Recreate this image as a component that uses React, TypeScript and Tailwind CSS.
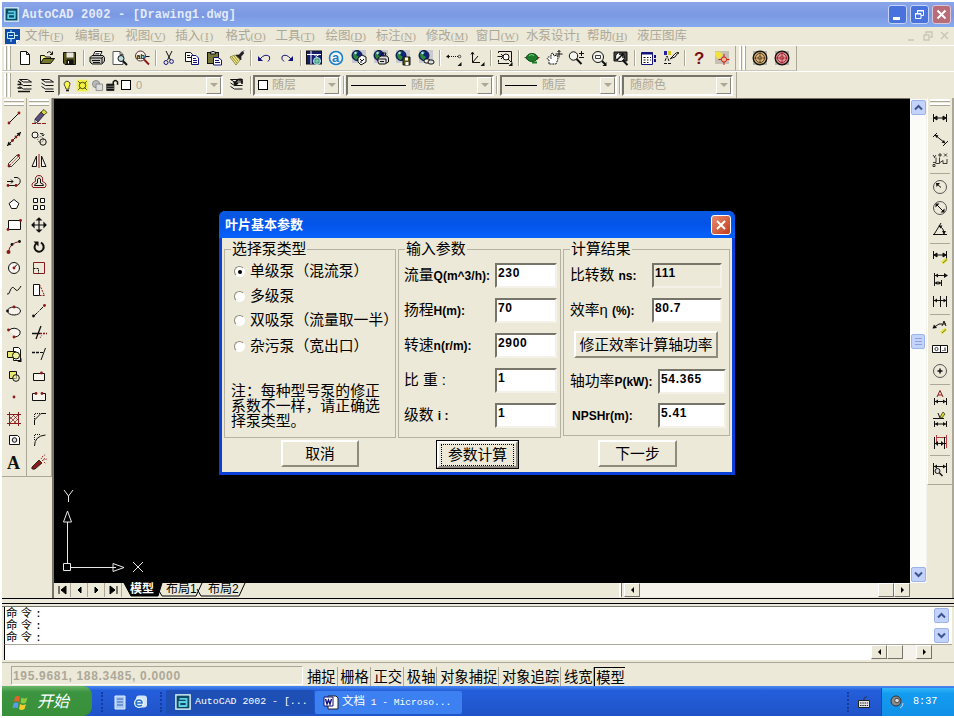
import { FC, Fragment, ReactNode } from "react";

interface IIconProps {
  children: ReactNode;
  size?: number;
}

const Icon: FC<IIconProps> = ({ children, size = 18 }) => (
  <svg
    width={size}
    height={size}
    viewBox="0 0 18 18"
    fill="none"
    stroke="#111"
    strokeWidth="1"
    className="shrink-0"
  >
    {children}
  </svg>
);

const RED = "#8b1a1a";

const Dot: FC<{ x: number; y: number; c?: string }> = ({ x, y, c = RED }) => (
  <circle cx={x} cy={y} r="1.4" fill={c} stroke="none" />
);

const globe = (
  <Fragment>
    <rect x="2" y="1" width="14" height="13" fill="#c9c9d2" stroke="none" />
    <circle cx="7" cy="6.5" r="5" fill="#10247c" stroke="#08123c" />
    <path d="M3 5q3-4 5-2l-2 3 3 2-2 3q-4-1-4-6" fill="#2b8a3a" stroke="none" />
    <circle cx="5.5" cy="4" r="1.2" fill="#bfe0ff" stroke="none" />
  </Fragment>
);

const dimH = (y: number) => (
  <path
    d={`M2.5 ${y - 4}v8M15.5 ${y - 4}v8M3 ${y}h12M6 ${y - 2}l-3 2 3 2zM12 ${y - 2}l3 2-3 2z`}
    fill="#111"
  />
);

const fileIcons = [
  <Icon key="new"><path d="M4.5 2.5h6l3 3v10h-9zM10.5 2.5v3h3" fill="#fff" /></Icon>,
  <Icon key="open">
    <path d="M2.5 14.5V6.5h4l1 1.500h5V9" fill="#f3ee8a" />
    <path d="M2.5 14.5L5.500 9.500h11l-4 5z" fill="#77772a" />
    <path d="M9 4q3-3 5 1M14.5 2.5v3H12" />
  </Icon>,
  <Icon key="save">
    <path d="M2.5 3.5h12v12H4l-1.500-1.500z" fill="#55551c" />
    <path d="M5.500 3.500h7v5h-7z" fill="#e8e8e0" stroke="none" />
    <path d="M6 11h6v4H6z" fill="#111" />
    <path d="M7.5 12v2.500" stroke="#fff" />
  </Icon>,
];

const printIcons = [
  <Icon key="print">
    <path d="M5 7l2-4.500h7l-2 4.500" fill="#fff" />
    <path d="M7.500 4.500h4M7 6h4" strokeWidth=".7" />
    <path d="M2 8.500l2-2h11l1.500 2V12L14 15H4l-2-2z" fill="#c4c4bc" />
    <path d="M2 9h12v5M4 11.500h8M5 13.500h7M14 9l2-2" />
  </Icon>,
  <Icon key="preview">
    <path d="M3 2.500h7l3 3v10H3zM10 2.500v3h3" fill="#fff" stroke="#555" />
    <circle cx="11" cy="9.500" r="3" fill="#b8dcdc" />
    <path d="M13 12l4 4" strokeWidth="2" />
  </Icon>,
  <Icon key="find">
    <circle cx="7.500" cy="7" r="5" fill="#f5efe8" stroke="#5c2c2c" />
    <path d="M11 10.500l5 5" stroke={RED} strokeWidth="2" />
    <text x="3.500" y="9.500" fontSize="7" fontFamily="Liberation Sans" fontWeight="700" fill="#111" stroke="none">ab</text>
    <path d="M13 7.500h3.500" />
  </Icon>,
];

const editIcons = [
  <Icon key="cut">
    <path d="M6 2l4.500 9M12 2L7.500 11" />
    <circle cx="6" cy="13.500" r="2" stroke="#14147c" />
    <circle cx="11.500" cy="12.500" r="1.900" stroke="#14147c" />
  </Icon>,
  <Icon key="copy">
    <path d="M2.500 3.500h5l2 2v7h-7z" fill="#fff" />
    <path d="M4 6.500h3M4 8.500h4" />
    <path d="M8.500 6.500h4.500l2.500 2.500v6.500h-7z" fill="#fff" stroke="#14147c" />
    <path d="M10 9.500h3M10 11.500h4M10 13.500h4" stroke="#14147c" />
  </Icon>,
  <Icon key="paste">
    <rect x="2.500" y="3.500" width="11" height="11" fill="#77773c" />
    <path d="M5.500 5V3h1.500q1-2 2 0h1.500v2z" fill="#ddd" />
    <path d="M8.500 8.500h4.500l3.500 2.500v5h-8z" fill="#fff" stroke="#14147c" />
    <path d="M10 11.500h4M10 13.500h5" stroke="#14147c" />
  </Icon>,
  <Icon key="brush">
    <path d="M2 8l5-2 5 5-4 5z" fill="#efe88a" stroke="#77772a" strokeWidth=".8" />
    <path d="M4 8l5 6M6 7l4 5" stroke="#77772a" strokeWidth=".8" />
    <path d="M8 6l3 0 3-3.500 2 1.500-3 3.500v3.500z" fill="#222" strokeWidth=".6" />
    <path d="M14 3.500l2-2" stroke="#2b2ba0" />
  </Icon>,
];

const undoIcons = [
  <Icon key="undo">
    <path d="M5 10q5-6 9.500-2.500q1 3-1.500 5" stroke="#14147c" />
    <path d="M3 7v5h5z" fill="#14147c" stroke="none" />
  </Icon>,
  <Icon key="redo">
    <path d="M13 10Q8 4 4 7.500q-1 3 2 5" stroke="#14147c" />
    <path d="M15 7v5h-5z" fill="#14147c" stroke="none" />
  </Icon>,
];

const webIcons = [
  <Icon key="today">
    <rect x="1.500" y="2" width="15" height="13" fill="#14206c" />
    <path d="M2 5.500h14M6 2v13" stroke="#fff" />
    <path d="M9 5.500l2 2 3-2" stroke="#fff" />
    <circle cx="12" cy="12" r="3.500" fill="#3c9c6c" stroke="#bfe0ff" />
    <path d="M12 8.500v7M8.500 12h7" stroke="#bfe0ff" strokeWidth=".6" />
  </Icon>,
  <Icon key="point">
    <circle cx="9" cy="9" r="6.500" fill="#f2f8fc" stroke="#1b7dc4" strokeWidth="1.600" />
    <text x="5" y="13" fontSize="13" fontFamily="Liberation Sans" fontWeight="700" fill="#1b7dc4" stroke="none">a</text>
  </Icon>,
  <Icon key="meet">{globe}<path d="M8 9l4-3 4 2v5l-5 3-3-3z" fill="#f4f4f4" /><path d="M10 10l2 2 2-2M11 14v-2" /></Icon>,
  <Icon key="publish">{globe}<path d="M6 9l3-2h6l1.500 2v4L13 15H7l-1-2z" fill="#ddd" /><path d="M6 10h8v4M9 7l1-3h4l-1 3M8 12.500h4" /></Icon>,
  <Icon key="etransmit">{globe}<path d="M9 8h7v8H9z" fill="#55551c" /><path d="M11 8.500h3v3h-3zM11.500 13h3v3h-3z" fill="#fff" stroke="none" /></Icon>,
  <Icon key="hyper">{globe}<rect x="7" y="10" width="6" height="4" rx="2" fill="#eee" /><rect x="11" y="11" width="6" height="4" rx="2" fill="#ddd" /></Icon>,
];

const corner = <path d="M16.500 13v4h-4z" fill="#111" stroke="none" />;

const snapIcons = [
  <Icon key="track"><path d="M4 7.500h9" strokeDasharray="1 1" /><path d="M1 7.500l3-2v4z" fill="#111" stroke="none" /><circle cx="14.500" cy="7.500" r="1.300" strokeWidth=".7" />{corner}</Icon>,
  <Icon key="ucs"><path d="M4.500 4v9.500H12M4.500 13.500L10 7M3 5.500L4.500 3 6 5.500" />{corner}</Icon>,
];

const aerialIcons = [
  <Icon key="aerial">
    <path d="M2.500 4V2.500H15.500v11M2.500 13.500V11M1.500 7.500h5M5 5l2.500 2.500L5 10" />
    <circle cx="10" cy="8" r="3" fill="#fff" />
    <path d="M12 10l3 3M2 14.500h11" />{corner}
  </Icon>,
];

const zoomIcons = [
  <Icon key="orbit">
    <path d="M1 8h16l-3 3H5z" fill="#7c2c1c" stroke="none" />
    <ellipse cx="9" cy="8.500" rx="5.500" ry="4" fill="#1c7c2c" stroke="#0c4c1c" />
    <path d="M6 6.500q3-2 5 0" stroke="#7fdc7f" />
    <path d="M9 12.500h5v2H9z" fill="#1c7c2c" stroke="none" />
  </Icon>,
  <Icon key="pan">
    <path d="M4 15V11L2 9.500l2-2 2 2V5l2-1 1 3 3-1 1 4-2 5z" fill="#fff" strokeDasharray="2 .8" />
    <path d="M14 1.500v7M10.500 5h7M12.500 3L14 1.500 15.500 3" />
  </Icon>,
  <Icon key="rt"><circle cx="6.500" cy="7" r="4.200" fill="#f4f4ee" /><path d="M9.500 10l5 5" strokeWidth="2" /><path d="M12 4.500h5M14.500 2v5M12 8.500h5" /></Icon>,
  <Icon key="win"><circle cx="8" cy="8" r="5.500" fill="#f4f4ee" /><path d="M5.500 6.500h5v3h-5z" strokeWidth=".8" /><path d="M12 12l3 3" strokeWidth="2" />{corner}</Icon>,
  <Icon key="prev"><path d="M2 3h13v9H2z" fill="#444" /><circle cx="8" cy="8" r="4.500" fill="#f4f4ee" /><path d="M5 11l6-6M7 5h4v4" strokeWidth="1.500" /><path d="M11 11.500l4.500 4.500" strokeWidth="2" /></Icon>,
];

const propIcons = [
  <Icon key="dc"><path d="M2.500 3.500h11v12h-11z" fill="#fff" stroke="#14147c" /><path d="M2.500 4.500h11" stroke="#14147c" strokeWidth="2" /><path d="M4.500 8.500h2M8 8.500h1.500M11 8.500h1M4.500 11h2M8 11h1.500M11 11h1M4.500 13.500h2M8 13.500h1.500" /><path d="M16 6v7" stroke="#14147c" strokeDasharray="3 1" strokeWidth="2" /></Icon>,
  <Icon key="props"><path d="M2 2h3v4H2z" fill="#2424a4" stroke="none" /><path d="M6 2h3v4H6z" fill="#d8c81c" stroke="none" /><path d="M3 12l2-5 2 5M2 14.500h8" strokeDasharray="3 1" /><path d="M8 10l3-3q4-5 6-3l-2 1-2 3-3 1z" fill="#fff" /></Icon>,
];

const helpIcons = [
  <Icon key="help"><text x="4" y="15" fontSize="17" fontFamily="Liberation Sans" fontWeight="700" fill="#7c1010" stroke="none">?</text></Icon>,
  <Icon key="assist"><rect x="2" y="2" width="14" height="13" fill="#c4c0b4" stroke="none" /><path d="M2 3q5-2 8 3l-4 4q-4-1-4-7" fill="#f2e23c" stroke="none" /><path d="M11 5v11M5.500 10.500h11" stroke="#d01818" /><circle cx="11" cy="10.500" r="2.600" fill="#f2c48c" stroke="#d01818" /></Icon>,
];

const target = (a: string, b: string) => (
  <Icon>
    <rect x="2" y="2" width="14" height="14" fill="#b4b4ac" stroke="none" />
    <circle cx="9" cy="9" r="6.800" fill={a} strokeWidth="1.400" />
    <circle cx="9" cy="9" r="4.500" stroke={b} />
    <circle cx="9" cy="9" r="1.800" stroke={b} strokeWidth=".7" />
    <path d="M9 2.500v13M2.500 9h13" stroke={b} strokeDasharray="2 1" />
  </Icon>
);

const groups: { w: string; icons: ReactNode[] }[] = [
  { w: "w-[67px]", icons: fileIcons },
  { w: "w-[67px]", icons: printIcons },
  { w: "w-[90px]", icons: editIcons },
  { w: "w-[45px]", icons: undoIcons },
  { w: "w-[134px]", icons: webIcons },
  { w: "w-[46px]", icons: snapIcons },
  { w: "w-[23px]", icons: aerialIcons },
  { w: "w-[111px]", icons: zoomIcons },
  { w: "w-[45px]", icons: propIcons },
  { w: "w-[46px]", icons: helpIcons },
];

const drawIcons: ReactNode[] = [
  <Fragment><path d="M4 14L14 4" /><Dot x={4} y={14} /><Dot x={14} y={4} /></Fragment>,
  <Fragment><path d="M2 16L16 2" /><path d="M2 16l1.500-4.500L6.500 14.500zM16 2l-4.500 1.500L14.500 6.500z" fill="#111" stroke="none" /><Dot x={7.5} y={10.5} /><Dot x={11} y={7} /></Fragment>,
  <Fragment><path d="M3 12l9-9 3 3-9 9z" strokeWidth=".8" /><path d="M5 13l9-9" stroke={RED} strokeDasharray="2 1" strokeWidth=".8" /><Dot x={4} y={14} /><Dot x={13.5} y={3.5} /></Fragment>,
  <Fragment><path d="M2.500 12.500h9M9 4.500h3q4 1 3 5-1 3-4 3M2 8.500h6M6 6.500l2 2-2 2" /><Dot x={3} y={12.5} /><Dot x={11} y={12.5} /></Fragment>,
  <path d="M9 4.500l5 4-2.500 5h-5L4 8.500z" fill="#fff" />,
  <Fragment><path d="M3.500 4.500h12v9h-12z" fill="#fff" /><Dot x={3} y={13.5} /><Dot x={15.5} y={4.5} /></Fragment>,
  <Fragment><path d="M3.500 14q1-9 11-10.500" stroke={RED} /><circle cx="3.500" cy="14" r="2" fill={RED} stroke="none" /><Dot x={7} y={6.5} c="#111" /><Dot x={14.5} y={3.5} c="#111" /></Fragment>,
  <Fragment><circle cx="9" cy="9" r="5.500" fill="#f6f4ec" /><path d="M9 9l3-3.500" /><Dot x={9} y={9} /></Fragment>,
  <path d="M2 13q2 1 3-3 2-6 5-2 2 4 6-3" />,
  <Fragment><ellipse cx="9" cy="9" rx="6.500" ry="4" fill="#f6f4ec" /><Dot x={9} y={5} /><Dot x={2.5} y={9} c="#111" /></Fragment>,
  <Fragment><path d="M4 6q6-4 11 1 1 5-5 6" fill="#f6f4ec" /><Dot x={3.5} y={6} /><Dot x={9} y={13} /></Fragment>,
  <Fragment><path d="M8.500 2.500h5l2 2v11h-7z" fill="#fff" /><path d="M2.500 6.500h8v6h-8z" fill="#e8e870" /><circle cx="11" cy="10.500" r="3.500" fill="#f0f0a0" />{corner}</Fragment>,
  <Fragment><path d="M4.500 4.500h7v7h-7z" fill="#e8e870" /><circle cx="11" cy="11" r="3.300" fill="#f0f0c0" fillOpacity=".6" /></Fragment>,
  <Dot x={9} y={9} />,
  <Fragment><path d="M4.500 2v14M13.500 2v14M2 4.500h14M2 13.500h14" stroke={RED} /><path d="M5 9l4-4M5 13l8-8M9 13l4-4M5 7l6 6M8 5l5 5" stroke={RED} strokeWidth=".7" /></Fragment>,
  <Fragment><path d="M4.500 4.500h8l2 2v7h-10z" fill="#fff" /><circle cx="9.500" cy="9" r="2.300" fill="#ddd" /></Fragment>,
  <text x="2" y="15.500" fontSize="18" fontFamily="Liberation Serif" fontWeight="700" fill="#111" stroke="none">A</text>,
];

const modifyIcons: ReactNode[] = [
  <Fragment><path d="M2 14.500h14" stroke={RED} strokeDasharray="4 1" /><path d="M5 10l6-7 3 3-6 7z" fill="#5c4c7c" strokeWidth=".7" /><path d="M11 3l3-2.500 3 3L14 6z" fill="#d8d83c" strokeWidth=".7" /><path d="M5 10l3 3-3 1z" fill="#fff" strokeWidth=".7" /></Fragment>,
  <Fragment><circle cx="5" cy="5" r="3" fill="#f6f4ec" /><circle cx="13" cy="12" r="3.200" /><circle cx="10.500" cy="9.500" r="2.800" strokeDasharray="1 1" strokeWidth=".8" /><path d="M10 3.500h3v2M11.500 4.500l1.500 1.500 1.500-1.500" strokeWidth=".8" /></Fragment>,
  <Fragment><path d="M6.500 4v10.500H2zM11.500 4v10.500H16z" fill="#f6f4ec" /><path d="M9 2v14" stroke={RED} /></Fragment>,
  <Fragment><path d="M3 14.500q-3-4 2.500-6-1-6 3.500-6t3.500 6q5.500 2 2.500 6z" stroke={RED} /><path d="M4.500 12.500q0-2 3-2.500V6q1.500-2 3 0v4q3 .500 3 2.500z" /></Fragment>,
  <path d="M3.500 3.500h4v4h-4zM10.500 3.500h4v4h-4zM3.500 10.500h4v4h-4zM10.500 10.500h4v4h-4z" fill="#fff" />,
  <path d="M9 2v14M2 9h14M7 4l2-2 2 2zM7 14l2 2 2-2zM4 7L2 9l2 2zM14 7l2 2-2 2z" fill="#111" strokeWidth="1.200" />,
  <Fragment><path d="M6 5.500q-3 4 0 7 4 3 7-1 2-4-2-7" strokeWidth="2" /><path d="M3.500 3.500h5v5z" fill="#111" stroke="none" /></Fragment>,
  <Fragment><path d="M3.500 3.500h11v11h-11z" stroke={RED} /><path d="M3.500 9.500h5v5" strokeDasharray="2 1" /></Fragment>,
  <Fragment><path d="M3.500 3.500h6v11h-6z" fill="#fff" /><path d="M9.500 3.500l5 11h-5" stroke={RED} strokeDasharray="2 1" /></Fragment>,
  <Fragment><path d="M4 14L14 4" strokeDasharray="5 1 1 1" /><Dot x={3.5} y={14} c="#111" /><Dot x={14.5} y={3.5} /></Fragment>,
  <Fragment><path d="M2 9.500h8M6 15l5-13" strokeWidth="1.300" /><path d="M10 9.500h7" stroke={RED} strokeDasharray="2 1" strokeWidth="1.500" /><path d="M10 14l2-3" stroke={RED} strokeDasharray="1 1" /></Fragment>,
  <Fragment><path d="M2 7.500h8" strokeDasharray="3 1" strokeWidth="1.500" /><path d="M10 7.500h3M11 15l4.500-12" /></Fragment>,
  <Fragment><path d="M3.500 6.500h11v7h-11z" fill="#f6f4ec" /><Dot x={11.5} y={6} /></Fragment>,
  <Fragment><path d="M5 5.500H2.500v7h13v-7H13" fill="#f6f4ec" /><Dot x={6} y={5.5} /><Dot x={12} y={5.5} /></Fragment>,
  <Fragment><path d="M4.500 15v-5L11 3.500h5" /><path d="M4.500 9V3.500H10" strokeDasharray="1 1" /></Fragment>,
  <Fragment><path d="M4.500 15q0-10 11-11" /><path d="M4.500 9V3.500H10" strokeDasharray="1 1" /></Fragment>,
  <Fragment><path d="M2 14l7-7 3 3-7 6q-4 1-3-2" fill="#8b1a1a" strokeWidth=".8" /><path d="M11 6l2-3M13 7l4-1M14 9l2 2M12 4l4-3M12 8l3-3" stroke={RED} strokeDasharray="1.500 1" strokeWidth=".8" /></Fragment>,
];

const dimGroups: { h: string; icons: ReactNode[] }[] = [
  {
    h: "h-[64px]",
    icons: [
      dimH(9),
      <Fragment><path d="M2 7l4-4M12 16l5-5M4 5l10 8" /><path d="M3.500 4.500l4 1-2 2.500zM14.500 13.500l-4-1L13 10z" fill="#111" stroke="none" /></Fragment>,
      <Fragment><path d="M2 11.500h3v-5M4.500 12.500h4v-6M9 11.500l3-2v3M12 12.500h4V8" strokeWidth=".8" /><path d="M2 4l1.500 2L5 4M3.500 6v1M8 3h2v2H8zM13 2.500l3 3M16 2.500l-3 3M2 13.500h2v2H2z" strokeWidth=".8" /></Fragment>,
    ],
  },
  {
    h: "h-[65px]",
    icons: [
      <Fragment><circle cx="9" cy="9" r="6.500" stroke="#555" /><path d="M10 9.500L6 6" /><path d="M5 5h4L5.500 9z" fill="#111" stroke="none" /></Fragment>,
      <Fragment><circle cx="9" cy="9" r="6.500" stroke="#555" /><path d="M5 5l8 8" /><path d="M4.500 4.500h4l-4 4zM13.500 13.500h-4l4-4z" fill="#111" stroke="none" /></Fragment>,
      <Fragment><path d="M2 13.500h14M3 13.500L10 2M8 5q5 2 5 8" /><path d="M13 13.500l-2-3.500h4zM7.500 4.500l4 0-2 3z" fill="#111" stroke="none" /></Fragment>,
    ],
  },
  {
    h: "h-[66px]",
    icons: [
      <Fragment>{dimH(7)}<path d="M11 15l5-4" stroke="#e2e23c" strokeWidth="3" /><path d="M12 15l4-3.500" strokeWidth=".5" /></Fragment>,
      <Fragment><path d="M3.500 3v13M10.500 10v6M3 5.500h12M3 13h7" /><path d="M13 3l4 2.500L13 8zM4 5.500l3-2v4zM4 13l2.500-2v4zM10 13l-2.500-2v4z" fill="#111" stroke="none" /></Fragment>,
      <Fragment><path d="M2.500 4v11M9.500 4v11M15.500 4v11M2 8.500h14" /><path d="M6 6.500l-3 2 3 2zM12.500 6.500l3 2-3 2z" fill="#111" stroke="none" /></Fragment>,
    ],
  },
  {
    h: "h-[65px]",
    icons: [
      <Fragment><path d="M2 9l6-4h3M11 7l2-5 2 5M12 5h3" /><path d="M1.500 9.500l1.500-4L6 9z" fill="#111" stroke="none" /><path d="M10 14l5-4" stroke="#e2e23c" strokeWidth="3" /><path d="M11 14l4-3.500" strokeWidth=".5" /></Fragment>,
      <Fragment><path d="M1.500 5.500h15v7h-15zM9.500 5.500v7" fill="#fff" /><circle cx="5.500" cy="9" r="1.600" strokeWidth=".8" /><path d="M11.500 10.500h1M14 7.500v3.500" /></Fragment>,
      <Fragment><circle cx="9" cy="9" r="6.500" stroke="#555" /><path d="M9 6.500v5M6.500 9h5" strokeWidth="1.500" /></Fragment>,
    ],
  },
  {
    h: "h-[66px]",
    icons: [
      <Fragment><path d="M6 8l3-6.500L12 8M7 6h4" stroke={RED} /><path d="M3.500 9v7M15.500 9v7M3 12.500h12" /><path d="M7 10.500l-3 2 3 2zM12 10.500l3 2-3 2z" fill="#111" stroke="none" /></Fragment>,
      <Fragment><path d="M9 6l3-5 2 2-3 4z" fill="#d8d81c" strokeWidth=".6" /><path d="M2 7.500h11M7 2l2 5" /><path d="M3.500 10v6M15.500 10v6M3 13h12" /><path d="M7 11l-3 2 3 2zM12 11l3 2-3 2z" fill="#111" stroke="none" /></Fragment>,
      <Fragment><path d="M5.500 2v8M15.500 2v13M5 4.500h11" stroke="#b83c3c" /><path d="M3.500 4v12M13.500 4v12M3 10.500h12" /><path d="M7 8l-3 2.500 3 2.500zM10 8l3 2.500-3 2.500z" fill="#111" stroke="none" /></Fragment>,
    ],
  },
  {
    h: "h-[22px]",
    icons: [
      <Fragment><path d="M2.500 3v12M15.500 3v10M3 6.500h12" /><path d="M6 4.500l-3 2 3 2zM12 4.500l3 2-3 2z" fill="#111" stroke="none" /><circle cx="6.500" cy="11" r="2.500" fill="#ddd" /><path d="M8.500 13l3 3" strokeWidth="1.500" /></Fragment>,
    ],
  },
];

const HGrip = () => (
  <div className="flex gap-px">
    <div className="w-[3px] border-r border-[#aca899] bg-white" />
    <div className="w-[3px] border-r border-[#aca899] bg-white" />
  </div>
);

const VGrip = () => (
  <div className="mx-0.5 mt-px flex h-[8px] flex-col gap-px">
    <div className="h-[3px] border-b border-[#aca899] bg-white" />
    <div className="h-[3px] border-b border-[#aca899] bg-white" />
  </div>
);

const Separator = () => (
  <div className="flex w-[5px] shrink-0 justify-center self-stretch py-1">
    <div className="w-[2px] border-l border-[#aca899] bg-white" />
  </div>
);

const Swatch = () => <div className="h-[10px] w-[10px] border border-black bg-white" />;

const Combo: FC<{ className: string; children: ReactNode }> = ({ className, children }) => (
  <div
    className={`flex h-[21px] shrink-0 items-center border-2 border-b-white border-l-[#77756a] border-r-white border-t-[#77756a] text-[12px] text-[#aca899] ${className}`}
  >
    <div className="flex grow items-center">{children}</div>
    <div className="flex h-[17px] w-[15px] items-center justify-center border border-b-[#8a887c] border-l-white border-r-[#8a887c] border-t-white">
      <div className="border-x-4 border-t-4 border-x-transparent border-t-[#aca899]" />
    </div>
  </div>
);

const CadLogo: FC<{ size: number }> = ({ size }) => (
  <Icon size={size}>
    <rect x="1" y="1" width="16" height="16" fill="#0d4a63" stroke="#d8f4fa" strokeWidth="1.600" />
    <path d="M5 5.500h8V14M13 9H5v4.500h8" stroke="#5fd0e6" strokeWidth="2" />
  </Icon>
);

const menus = [
  ["文件", "F"],
  ["编辑", "E"],
  ["视图", "V"],
  ["插入", "I"],
  ["格式", "O"],
  ["工具", "T"],
  ["绘图", "D"],
  ["标注", "N"],
  ["修改", "M"],
  ["窗口", "W"],
];

const MenuItem: FC<{ label: string; hotkey: string }> = ({ label, hotkey }) => (
  <span className="flex w-[50.100px] shrink-0">
    {label}
    <span className="flex w-[13px] justify-between font-['Liberation_Serif'] text-[11px]">
      <span>(</span>
      <u>{hotkey}</u>
      <span>)</span>
    </span>
  </span>
);

const TitleBar = () => (
  <div className="flex h-[25px] shrink-0 items-center bg-gradient-to-b from-[#8ba6e8] via-[#7b98e3] to-[#86a9ee] pl-[2px] pr-[3px]">
    <CadLogo size={15} />
    <span className="ml-[3px] grow whitespace-nowrap font-['Liberation_Mono'] text-[12px] font-bold tracking-[0.180px] text-[#e3ebfb]">
      AutoCAD 2002 - [Drawing1.dwg]
    </span>
    <div className="flex gap-[3px]">
      <div className="flex h-[19px] w-[19px] items-end rounded-[3px] border border-[#c5d3f5] bg-[#4a72dc] pb-[3px] pl-1">
        <div className="h-[3px] w-[7px] bg-white" />
      </div>
      <div className="flex h-[19px] w-[19px] items-center justify-center rounded-[3px] border border-[#c5d3f5] bg-[#4a72dc]">
        <svg width="11" height="11" viewBox="0 0 11 11" fill="none" stroke="#fff">
          <path d="M3.500 4V1.500h6v5H7M1.500 4.500H7v5H1.500zM3 2h7M1 5h6" />
        </svg>
      </div>
      <div className="flex h-[19px] w-[19px] items-center justify-center rounded-[3px] border border-[#d9c5d5] bg-[#b96c78]">
        <svg width="11" height="11" viewBox="0 0 11 11" stroke="#fff" strokeWidth="2">
          <path d="M1.500 1.500l8 8M9.500 1.500l-8 8" />
        </svg>
      </div>
    </div>
  </div>
);

const MenuBar = () => (
  <div className="flex h-[18px] shrink-0 items-center whitespace-nowrap pl-[3px] text-[12.500px] leading-[18px] text-[#aca899]">
    <svg width="15" height="15" viewBox="0 0 15 15" className="mr-[5px] shrink-0">
      <path d="M0 0h15v11l-4 4H0z" fill="#0c4ca8" />
      <path d="M2.500 3.500h7v6h-7zM9 6.500h4M6 9.500V13M6 3.500V1M4 6.500h4" fill="none" stroke="#c8f0ff" />
      <path d="M15 11l-4 4v-4z" fill="#fff" />
    </svg>
    {menus.map(([label, hotkey]) => (
      <MenuItem key={hotkey} label={label} hotkey={hotkey} />
    ))}
    <span className="w-[61px] shrink-0">
      水泵设计<u className="font-['Liberation_Serif'] text-[11px]">I</u>
    </span>
    <MenuItem label="帮助" hotkey="H" />
    <span className="grow">液压图库</span>
    <svg width="44" height="12" viewBox="0 0 44 12" fill="none" stroke="#c9c6b8" strokeWidth="1.400" className="mr-[3px]">
      <path d="M1 10h6M19 4V2h6v5h-2M17 5h5v5h-5zM34 2l7 7M41 2l-7 7" />
    </svg>
  </div>
);

const StandardToolbar = () => (
  <div className="flex h-[26px] shrink-0 border-t border-white">
    <div className="flex w-[734px] border-b border-r border-b-[#c9c6b8] border-r-[#aca899] pl-[2px]">
      <HGrip />
      <div className="w-[3px]" />
      {groups.map(({ w, icons }, i) => (
        <Fragment key={i}>
          {i > 0 && <Separator />}
          <div className={`flex shrink-0 items-center justify-around ${w}`}>{icons}</div>
        </Fragment>
      ))}
    </div>
    <div className="flex w-[61px] border-b border-r border-b-[#c9c6b8] border-r-[#aca899] pl-[3px]">
      <HGrip />
      <div className="ml-[3px] flex w-[44px] items-center justify-around">
        {target("#d8b87c", "#5c3c1c")}
        {target("#e09c9c", "#a41c2c")}
      </div>
    </div>
  </div>
);

const layerStack = (
  <path
    d="M3.500 3.500h8l4 2.500h-8zM3.500 7l4 2.500h8M3.500 10.500l4 2.500h8"
    fill="#f6f4ec"
  />
);

const PropertiesToolbar = () => (
  <div className="flex h-[27px] shrink-0 border-t border-white">
    <div className="flex w-[735px] items-center border-r border-[#aca899] pl-[2px]">
      <div className="flex h-[24px]"><HGrip /></div>
      <div className="ml-[3px] flex w-[44px] justify-around">
        <Icon>{layerStack}<path d="M2 5l3 2M2 15.500h12M1.500 8.500h4M1.500 12h4" strokeWidth="1.400" /></Icon>
        <Icon>{layerStack}<path d="M7 15.500h9" /></Icon>
      </div>
      <Combo className="w-[165px]">
        <div className="flex items-center gap-[2px] pl-px">
          <Icon size={13}>
            <path d="M6 11q-4-6 2-8 7 1 3 8v3H7z" fill="#f8f84c" />
            <path d="M7 16h4" strokeWidth="2" />
          </Icon>
          <Icon size={13}>
            <rect x="1" y="1" width="16" height="16" fill="#f2f23c" stroke="none" />
            <circle cx="9" cy="9" r="4.500" />
            <path d="M3 3l3 3M15 3l-3 3M3 15l3-3M15 15l-3-3" />
          </Icon>
          <Icon size={13}>
            <circle cx="7" cy="7" r="5" stroke="#777" fill="#bbb" />
            <path d="M7 7h9v9H7z" stroke="#777" fill="#ddd" />
          </Icon>
          <Icon size={13}>
            <path d="M1 7h10v9H1z" fill="#111" />
            <path d="M10 8V4q3-4 6 0v4" strokeWidth="2" />
            <path d="M1 10h10M1 13h10" stroke="#aaa" />
          </Icon>
          <Swatch />
          <span className="ml-[3px] text-[11px]">0</span>
        </div>
      </Combo>
      <div className="ml-[4px] mr-[3px]">
        <Icon>{layerStack}<path d="M8 8.500q1-6 7-5M15 3v5M7 5.500l1 3.500 3-2" strokeWidth="1.600" /></Icon>
      </div>
      <Separator />
      <Combo className="w-[88px]">
        <div className="ml-[3px]"><Swatch /></div>
        <span className="ml-[4px]">随层</span>
      </Combo>
      <Separator />
      <Combo className="w-[148px]">
        <div className="ml-[3px] h-px w-[55px] bg-black" />
        <span className="ml-[5px]">随层</span>
      </Combo>
      <Separator />
      <Combo className="ml-px w-[117px]">
        <div className="ml-[3px] h-px w-[32px] bg-black" />
        <span className="ml-[5px]">随层</span>
      </Combo>
      <Separator />
      <Combo className="w-[111px]">
        <span className="ml-[6px]">随颜色</span>
      </Combo>
    </div>
  </div>
);

const SideBar: FC<{ icons: ReactNode[] }> = ({ icons }) => (
  <div className="flex h-[379px] w-[25px] flex-col border-b border-r border-[#aca899]">
    <VGrip />
    <div className="flex grow flex-col items-center justify-around pb-[3px]">
      {icons.map((icon, i) => (
        <Icon key={i}>{icon}</Icon>
      ))}
    </div>
  </div>
);

const XpArrow: FC<{ down?: boolean }> = ({ down }) => (
  <div className="flex h-[15px] w-[15px] shrink-0 items-center justify-center rounded-[2px] border border-[#9db4e8] bg-[#c3d3fb]">
    <svg width="9" height="7" viewBox="0 0 9 7" fill="none" stroke="#3d5490" strokeWidth="2">
      <path d={down ? "M1 1.500l3.500 3.500L8 1.500" : "M1 5.500L4.500 2 8 5.500"} />
    </svg>
  </div>
);

const ClassicArrow: FC<{ dir?: "left" | "right" }> = ({ dir }) => (
  <div className="flex h-[14px] w-[16px] shrink-0 items-center justify-center border border-b-[#77756a] border-l-white border-r-[#77756a] border-t-white bg-[#ece9d8]">
    {dir === "left" && <div className="border-y-[3px] border-r-[3px] border-y-transparent border-r-black" />}
    {dir === "right" && <div className="border-y-[3px] border-l-[3px] border-y-transparent border-l-black" />}
  </div>
);

const Field: FC<{ value: string; className: string }> = ({ value, className }) => (
  <div
    className={`shrink-0 border-2 border-b-[#f4f2e8] border-l-[#77756a] border-r-[#f4f2e8] border-t-[#77756a] pl-[1px] font-['Liberation_Sans'] text-[12px] font-bold leading-[16px] tracking-[0.700px] text-black ${className}`}
  >
    {value}
  </div>
);

const Label: FC<{ cjk?: string; latin?: string }> = ({ cjk, latin }) => (
  <span className="grow whitespace-nowrap text-[14.800px] leading-[24px]">
    {cjk}
    <span className="font-['Liberation_Sans'] text-[12px] font-bold">{latin}</span>
  </span>
);

const GroupBox: FC<{ title: string; className: string; children: ReactNode }> = ({
  title,
  className,
  children,
}) => (
  <fieldset className={`min-w-0 shrink-0 border border-[#b5b2a3] ${className}`}>
    <legend className="ml-[6px] h-[18px] px-px text-[14.900px] leading-[18px]">{title}</legend>
    {children}
  </fieldset>
);

const Button: FC<{ className: string; children: ReactNode }> = ({ className, children }) => (
  <button
    className={`flex h-[27px] shrink-0 items-center justify-center whitespace-nowrap border-2 border-b-[#8f8c7e] border-l-white border-r-[#8f8c7e] border-t-white bg-[#ece9d8] text-[14.800px] leading-[20px] ${className}`}
  >
    {children}
  </button>
);

const pumpTypes = [
  { label: "单级泵（混流泵）", h: "h-[25px]", checked: true },
  { label: "多级泵", h: "h-[24px]" },
  { label: "双吸泵（流量取一半）", h: "h-[24px]" },
  { label: "杂污泵（宽出口）", h: "h-[29px]" },
];

const inputs = [
  { cjk: "流量", latin: "Q(m^3/h):", value: "230" },
  { cjk: "扬程", latin: "H(m):", value: "70" },
  { cjk: "转速", latin: "n(r/m):", value: "2900" },
  { cjk: "比 重 :", latin: "", value: "1" },
  { cjk: "级数 ", latin: "i :", value: "1" },
];

const ParamsDialog = () => (
  <div className="absolute left-[165px] top-[112px] flex h-[264px] w-[516px] flex-col rounded-t-[6px] border-[3px] border-t-0 border-[#0840d8] bg-[#ece9d8] text-black">
    <div className="-mx-[3px] flex h-[27px] shrink-0 items-center rounded-t-[6px] bg-gradient-to-b from-[#0a58e0] via-[#0454ea] to-[#0662fb] pl-[6px] pr-[3px]">
      <span className="grow text-[13px] font-bold text-white">叶片基本参数</span>
      <div className="mr-px flex h-[20px] w-[20px] items-center justify-center rounded-[3px] border border-white bg-gradient-to-br from-[#e88a70] to-[#c03c18]">
        <svg width="12" height="12" viewBox="0 0 12 12" stroke="#fff" strokeWidth="2">
          <path d="M2 2l8 8M10 2l-8 8" />
        </svg>
      </div>
    </div>
    <div className="flex h-[200px] shrink-0 pl-[2px] pt-[2px]">
      <GroupBox title="选择泵类型" className="h-[198px] w-[172px]">
        <div className="flex flex-col pt-px">
          {pumpTypes.map(({ label, h, checked }) => (
            <div key={label} className={`flex items-center whitespace-nowrap pl-[9px] ${h}`}>
              <div className="flex h-[11px] w-[11px] shrink-0 items-center justify-center rounded-full border border-b-white border-l-[#8f8c7e] border-r-white border-t-[#8f8c7e] bg-white">
                {checked && <div className="h-1 w-1 rounded-full bg-black" />}
              </div>
              <span className="ml-[5px] text-[14.800px]">{label}</span>
            </div>
          ))}
        </div>
        <p className="whitespace-nowrap pl-[6px] pt-[23px] text-[14.900px] leading-[15px]">
          注：每种型号泵的修正
          <br />
          系数不一样，请正确选
          <br />
          择泵类型。
        </p>
      </GroupBox>
      <GroupBox title="输入参数" className="ml-[2px] h-[198px] w-[163px]">
        <div className="flex flex-col gap-[10px] pl-[5px] pt-[5px]">
          {inputs.map(({ cjk, latin, value }) => (
            <div key={cjk} className="flex h-[25px]">
              <Label cjk={cjk} latin={latin} />
              <Field value={value} className="mr-[3px] w-[62px] bg-white" />
            </div>
          ))}
        </div>
      </GroupBox>
      <GroupBox title="计算结果" className="ml-[2px] h-[196px] w-[167px]">
        <div className="flex flex-col pl-[6px] pt-[5px]">
          <div className="flex h-[25px]">
            <Label cjk="比转数 " latin="ns:" />
            <Field value="111" className="mr-[7px] w-[70px] bg-[#ece9d8]" />
          </div>
          <div className="mt-[10px] flex h-[25px]">
            <Label cjk="效率η " latin="(%):" />
            <Field value="80.7" className="mr-[7px] w-[70px] bg-white" />
          </div>
          <Button className="ml-[4px] mt-[8px] w-[144px]">修正效率计算轴功率</Button>
          <div className="mt-[11px] flex h-[25px]">
            <Label cjk="轴功率" latin="P(kW):" />
            <Field value="54.365" className="mr-[3px] w-[68px] bg-white" />
          </div>
          <div className="mt-[9px] flex h-[25px] pl-[2px]">
            <Label latin="NPSHr(m):" />
            <Field value="5.41" className="mr-[3px] w-[68px] bg-white" />
          </div>
        </div>
      </GroupBox>
    </div>
    <div className="flex pl-[59px] pt-[2px]">
      <Button className="w-[78px]">取消</Button>
      <div className="ml-[77px] border border-black">
        <Button className="h-[25px] w-[81px] p-px">
          <span className="border border-dotted border-black px-[6px]">参数计算</span>
        </Button>
      </div>
      <Button className="ml-[79px] w-[79px]">下一步</Button>
    </div>
  </div>
);

const UcsIcon = () => (
  <svg
    width="92"
    height="90"
    viewBox="0 0 92 90"
    fill="none"
    stroke="#e8e8e8"
    className="absolute left-[6px] top-[389px]"
  >
    <path d="M3.500 75.500h7v7h-7zM7.500 75V34M11 79.500h45M7.500 23l-4 11h8zM64 79.500l-11-4v8zM4 2l4.500 6L13 2M8.500 8v6M73 74l10 10M83 74L73 84" />
  </svg>
);

const LayoutTabs = () => (
  <div className="flex h-[15px] shrink-0 items-start bg-[#ece9d8]">
    {["M4 3v8M11 3L6 7l5 4z", "M9 4L6 7l3 3z", "M6 4l3 3-3 3z", "M4 3l5 4-5 4zM11 3v8"].map((d) => (
      <div key={d} className="flex h-[14px] w-[17px] justify-center border-r border-[#aca899]">
        <svg width="14" height="14" fill="#000" stroke="#000"><path d={d} /></svg>
      </div>
    ))}
    <div className="relative flex h-[14px] w-[130px] text-[12px] leading-[13px] text-black">
      <svg width="130" height="14" className="absolute left-0 top-0" fill="none" stroke="#000">
        <path d="M2 0l7 13h27l4-13z" fill="#000" />
        <path d="M36 6l4 7h34l6-13M75 6l4 7h38l6-13" />
      </svg>
      <span className="relative ml-[8px] w-[36px] font-bold text-white">模型</span>
      <span className="relative w-[42px]">布局1</span>
      <span className="relative">布局2</span>
    </div>
    <div className="grow" />
    <div className="mr-[2px] h-[14px] w-[3px] border-r border-[#77756a] bg-white" />
    <ClassicArrow dir="left" />
    <div className="h-[14px] w-[238px] bg-[#f4f2ea]" />
    <ClassicArrow />
    <ClassicArrow dir="right" />
  </div>
);

const Workspace = () => (
  <div className="flex h-[500px] shrink-0">
    <SideBar icons={drawIcons} />
    <SideBar icons={modifyIcons} />
    <div className="flex w-[858px] flex-col border-l-2 border-t border-[#77756a]">
      <div className="relative h-[484px] bg-black">
        <UcsIcon />
        <ParamsDialog />
      </div>
      <LayoutTabs />
    </div>
    <div className="mt-px flex h-[484px] w-[17px] flex-col items-center justify-between border-r border-[#f4f2ea] bg-[#fbfbf8] py-px">
      <XpArrow />
      <div className="mt-[219px] flex h-[15px] w-[14px] shrink-0 flex-col items-center justify-center gap-[2px] rounded-[2px] border border-[#9db4e8] bg-[#c3d3fb]">
        <div className="h-px w-[7px] bg-[#8aa4e0]" />
        <div className="h-px w-[7px] bg-[#8aa4e0]" />
        <div className="h-px w-[7px] bg-[#8aa4e0]" />
      </div>
      <div className="grow" />
      <XpArrow down />
    </div>
    <div className="flex h-[387px] w-[25px] flex-col border-b border-l border-b-[#aca899] border-l-white">
      <VGrip />
      {dimGroups.map(({ h, icons }, i) => (
        <Fragment key={i}>
          {i > 0 && <div className="mx-0.5 my-[2px] h-px shrink-0 bg-[#aca899]" />}
          <div className={`flex shrink-0 flex-col items-center justify-around ${h}`}>
            {icons.map((icon, j) => (
              <Icon key={j}>{icon}</Icon>
            ))}
          </div>
        </Fragment>
      ))}
    </div>
    <div className="w-[2px] bg-[#aca899]" />
  </div>
);

const CommandLine = () => (
  <div className="flex h-[65px] shrink-0 flex-col border-b border-[#aca899]">
    <div className="h-[6px] shrink-0 border-b border-t border-black" />
    <div className="h-[3px] shrink-0 border-b border-[#77756a] bg-[#ece9d8]" />
    <div className="mx-[2px] flex h-[38px] shrink-0 border-b border-l border-b-[#aca899] border-l-black bg-white">
      <div className="w-[929px] pl-[1px] pt-px font-['Liberation_Mono','Noto_Sans_CJK_SC'] text-[11.500px] leading-[12.200px] text-black">
        <p className="tracking-[3px]">命令:</p>
        <p className="tracking-[3px]">命令:</p>
        <p className="tracking-[3px]">命令:</p>
      </div>
      <div className="flex flex-col justify-between py-px">
        <XpArrow />
        <XpArrow down />
      </div>
    </div>
    <div className="ml-[2px] flex h-[15px] shrink-0">
      <div className="w-[867px] border-l border-black bg-white" />
      <ClassicArrow dir="left" />
      <ClassicArrow />
      <div className="w-[13px] bg-[#f4f2ea]" />
      <ClassicArrow dir="right" />
    </div>
  </div>
);

const toggles = ["捕捉", "栅格", "正交", "极轴", "对象捕捉", "对象追踪", "线宽"];

const StatusBar = () => (
  <div className="flex h-[23px] shrink-0 items-end overflow-hidden pl-[9px]">
    <div className="mb-px h-[19px] w-[292px] border border-b-white border-l-[#aca899] border-r-white border-t-[#aca899] pl-[1px] font-['Liberation_Sans'] text-[12px] font-bold leading-[19px] tracking-[0.680px] text-[#aca899]">
      195.9681, 188.3485, 0.0000
    </div>
    <div className="flex gap-[1.700px] pl-[3px] text-[14.300px] leading-[20px] text-black">
      {toggles.map((label) => (
        <div key={label} className="h-[19px] whitespace-nowrap border-r border-[#aca899] pl-[1px] pr-px">
          {label}
        </div>
      ))}
      <div className="-ml-[2px] h-[19px] border-l border-t border-black pl-px">模型</div>
    </div>
  </div>
);

const DottedSep = () => <div className="h-[20px] border-l-2 border-dotted border-[#173a9c]" />;

const TaskBar = () => (
  <div className="flex h-[30px] shrink-0 items-center bg-gradient-to-b from-[#4a8af0] via-[#245edb] via-15% to-[#1f54c8] pt-[2px] text-[12px] text-white">
    <div className="-mt-[2px] flex h-[30px] w-[90px] items-center rounded-r-[9px] bg-gradient-to-b from-[#6cb86a] via-[#3c9440] via-20% to-[#38903a] pl-[10px] pt-[2px]">
      <svg width="18" height="17" viewBox="0 0 18 17">
        <path d="M3 3q3-2 5 0L7 8q-2-2-5 0z" fill="#e8602c" />
        <path d="M9.500 3.500q3 2 6 0L14 8.500q-3 2-5.500 0z" fill="#8ccc3c" />
        <path d="M1.500 9.500q3-2 5 0l-1 5q-2-2-5 0z" fill="#5c9cf0" />
        <path d="M8 10q3 2 6 0l-1.500 5q-3 2-5.500 0z" fill="#f4cc2c" />
      </svg>
      <span className="ml-[7px] text-[16px] italic leading-[20px]">开始</span>
    </div>
    <div className="ml-[9px]"><DottedSep /></div>
    <div className="ml-[9px] flex gap-[4px]">
      <svg width="16" height="17" viewBox="0 0 16 17">
        <path d="M3 2h10v13H3z" fill="#a8c8f4" stroke="#e4f0ff" />
        <path d="M5 5h6M5 8h6M5 11h6" stroke="#3c64b0" />
      </svg>
      <svg width="16" height="17" viewBox="0 0 16 17" fill="none">
        <rect x="4" y="1.500" width="11" height="12" rx="3" fill="#d4e4f8" />
        <circle cx="7" cy="9" r="5" fill="#eef6ff" />
        <path d="M4 9h6q0-3-3-3T4 9q0 3 3 3 2 0 3-1" stroke="#2870c8" strokeWidth="1.500" />
      </svg>
    </div>
    <div className="ml-[12px]"><DottedSep /></div>
    <div className="ml-[4px] flex h-[24px] w-[148px] items-center rounded-[2px] bg-[#1e4fb4] pl-[9px]">
      <CadLogo size={16} />
      <span className="ml-[4px] whitespace-pre font-['Liberation_Mono'] text-[9.900px]">AutoCAD 2002 - [...</span>
    </div>
    <div className="ml-[1px] flex h-[23px] w-[147px] items-center rounded-[2px] bg-[#3c80f2] pl-[8px]">
      <svg width="16" height="15" viewBox="0 0 16 15">
        <path d="M5 1h8l2 2v11H5z" fill="#fff" stroke="#222" />
        <path d="M1 2h9v9H1z" fill="#fff" stroke="#14147c" />
        <path d="M2.500 4l1.500 5 1.500-4L7 9l1.500-5" fill="none" stroke="#14147c" strokeWidth="1.400" />
      </svg>
      <span className="ml-[3px] whitespace-pre font-['Liberation_Mono','Noto_Sans_CJK_SC'] text-[9.600px]">
        <span className="text-[11.500px]">文档</span> 1 - Microso...
      </span>
    </div>
    <div className="grow" />
    <DottedSep />
    <svg width="14" height="14" viewBox="0 0 14 14" className="ml-[8px] mr-[10px]">
      <path d="M1.500 5.500h11v7h-11z" fill="#e4e4e4" stroke="#222" />
      <path d="M3 8h8M3 10.500h8M7 5V3l3-1.500" fill="none" stroke="#222" strokeDasharray="1.500 .8" />
    </svg>
    <div className="flex h-[28px] w-[73px] items-center self-end border-l border-[#0c50b4] bg-gradient-to-b from-[#32b4f8] via-[#129cf0] via-20% to-[#1290e8] pl-[8px]">
      <svg width="15" height="16" viewBox="0 0 15 16" fill="none">
        <circle cx="6" cy="7" r="5" fill="#8c8c8c" stroke="#333" />
        <circle cx="7" cy="6.500" r="2.300" fill="#ddd" stroke="#444" />
        <path d="M10 14q3-1 3-5" stroke="#cce" />
      </svg>
      <span className="ml-[8px] font-['Liberation_Mono'] text-[10.200px]">8:37</span>
    </div>
  </div>
);

const App = () => (
  <div className="h-[718px] w-[954px] overflow-hidden bg-white pl-[2px] pt-[2px] font-['Liberation_Sans','Noto_Sans_CJK_SC',sans-serif]">
    <div className="flex h-[714px] w-[952px] flex-col bg-[#ece9d8]">
      <TitleBar />
      <MenuBar />
      <StandardToolbar />
      <PropertiesToolbar />
      <Workspace />
      <CommandLine />
      <StatusBar />
      <TaskBar />
    </div>
  </div>
);

export default App;
